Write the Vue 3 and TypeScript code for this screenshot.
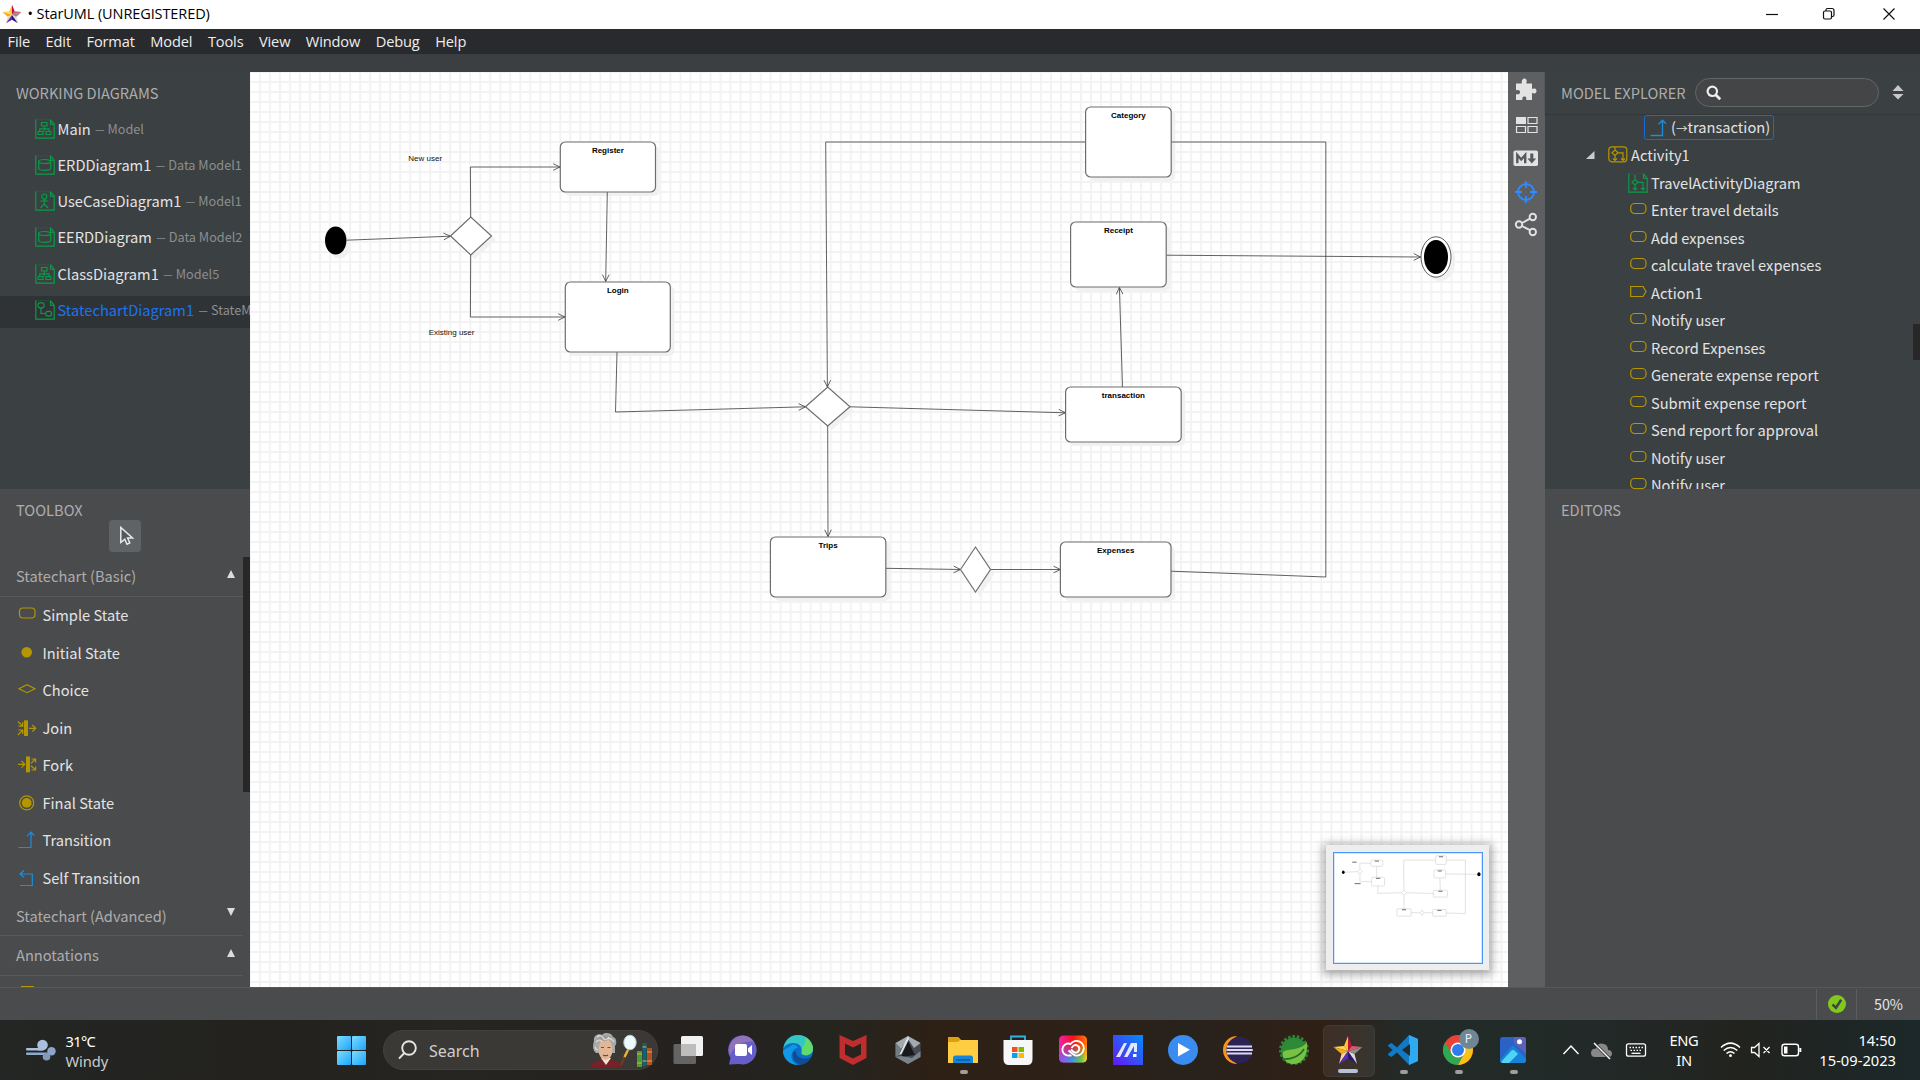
<script setup lang="ts">
interface DiagramRow { name: string; owner: string; icon: string; active?: boolean }
interface ToolItem { label: string; icon: string }
interface Box { x: number; y: number; w: number; h: number; label: string }
interface Edge { pts: number[][]; arrow: boolean }

const menus = ['File', 'Edit', 'Format', 'Model', 'Tools', 'View', 'Window', 'Debug', 'Help']

const diagrams: DiagramRow[] = [
  { name: 'Main', owner: 'Model', icon: 'class' },
  { name: 'ERDDiagram1', owner: 'Data Model1', icon: 'erd' },
  { name: 'UseCaseDiagram1', owner: 'Model1', icon: 'usecase' },
  { name: 'EERDDiagram', owner: 'Data Model2', icon: 'erd' },
  { name: 'ClassDiagram1', owner: 'Model5', icon: 'class' },
  { name: 'StatechartDiagram1', owner: 'StateMachine1', icon: 'state', active: true },
]

const tools: ToolItem[] = [
  { label: 'Simple State', icon: 'simple' },
  { label: 'Initial State', icon: 'initial' },
  { label: 'Choice', icon: 'choice' },
  { label: 'Join', icon: 'join' },
  { label: 'Fork', icon: 'fork' },
  { label: 'Final State', icon: 'final' },
  { label: 'Transition', icon: 'transition' },
  { label: 'Self Transition', icon: 'self' },
]

const actions: ToolItem[] = [
  { label: 'Enter travel details', icon: 'action' },
  { label: 'Add expenses', icon: 'action' },
  { label: 'calculate travel expenses', icon: 'action' },
  { label: 'Action1', icon: 'signal' },
  { label: 'Notify user', icon: 'action' },
  { label: 'Record Expenses', icon: 'action' },
  { label: 'Generate expense report', icon: 'action' },
  { label: 'Submit expense report', icon: 'action' },
  { label: 'Send report for approval', icon: 'action' },
  { label: 'Notify user', icon: 'action' },
  { label: 'Notify user', icon: 'action' },
]

const boxes: Box[] = [
  { x: 560.3, y: 142, w: 95.2, h: 50, label: 'Register' },
  { x: 565.3, y: 282, w: 105, h: 70, label: 'Login' },
  { x: 1085.6, y: 107, w: 85.6, h: 70, label: 'Category' },
  { x: 1070.6, y: 222, w: 95.6, h: 65, label: 'Receipt' },
  { x: 1065.6, y: 387, w: 115.6, h: 55, label: 'transaction' },
  { x: 770.4, y: 537, w: 115.4, h: 60, label: 'Trips' },
  { x: 1060.4, y: 542, w: 110.6, h: 55, label: 'Expenses' },
]

const diamonds = [
  '450.5,236 470.8,217 491.5,236 470.8,255',
  '805.5,406.8 827.7,387 850,406.8 827.7,426',
  '960.5,569.5 975.5,547 990.5,569.5 975.5,592',
]

const edges: Edge[] = [
  { pts: [[346.5, 240.2], [450.5, 236.2]], arrow: true },
  { pts: [[470.7, 217], [470.4, 167], [560, 167]], arrow: true },
  { pts: [[470.7, 255], [470.4, 317], [565, 317]], arrow: true },
  { pts: [[607.3, 192], [605.7, 281.5]], arrow: true },
  { pts: [[617, 352], [615.5, 412], [805.5, 406.8]], arrow: true },
  { pts: [[850, 406.8], [1065.4, 412.8]], arrow: true },
  { pts: [[827.7, 426], [828, 536.6]], arrow: true },
  { pts: [[885.8, 568.3], [960.5, 569.5]], arrow: true },
  { pts: [[990.5, 569.5], [1060.4, 569.5]], arrow: true },
  { pts: [[1122.5, 387], [1119.4, 287.4]], arrow: true },
  { pts: [[1166.2, 255.2], [1420.6, 257]], arrow: true },
  { pts: [[1085.6, 142], [825.7, 142], [827.4, 387]], arrow: true },
  { pts: [[1171, 571.2], [1325.8, 577], [1325.8, 142], [1171.2, 142]], arrow: false },
]

const toPoints = (e: Edge): string => e.pts.map((p) => p.join(',')).join(' ')

const head = (e: Edge): string => {
  const [x, y] = e.pts[e.pts.length - 1]
  const [px, py] = e.pts[e.pts.length - 2]
  const a = Math.atan2(y - py, x - px)
  const at = (d: number): string =>
    `${(x - 7.6 * Math.cos(a + d)).toFixed(1)},${(y - 7.6 * Math.sin(a + d)).toFixed(1)}`
  return `${at(0.45)} ${x},${y} ${at(-0.45)}`
}

const apps = ['taskview', 'chat', 'edge', 'mcafee', 'armoury', 'explorer', 'store', 'cc', 'myasus', 'player', 'eclipse', 'spring', 'staruml', 'vscode', 'chrome', 'photos']
const running = ['explorer', 'vscode', 'chrome', 'photos']
</script>

<template>
  <div class="screen">
    <svg class="defs" width="0" height="0" aria-hidden="true">
      <defs>
        <symbol id="star" viewBox="0 0 30 30">
          <path d="M15 1 L11 11 L15 16Z" fill="#ffc52e" />
          <path d="M15 1 L19 11 L15 16Z" fill="#c2103c" />
          <path d="M11 11 L0.5 12 L15 16Z" fill="#ffd94a" />
          <path d="M.5 12 L8.500 19 L15 16Z" fill="#f4ab1c" />
          <path d="M8.500 19 L6 29 L15 16Z" fill="#f7d9a0" />
          <path d="M6 29 L15 23.500 L15 16Z" fill="#5b2bc4" />
          <path d="M15 23.500 L24 29 L15 16Z" fill="#2c1470" />
          <path d="M24 29 L21.500 19 L15 16Z" fill="#d9d9d9" />
          <path d="M21.500 19 L29.500 12 L15 16Z" fill="#8c8c8c" />
          <path d="M29.500 12 L19 11 L15 16Z" fill="#e0566f" />
        </symbol>
        <symbol id="d-page" viewBox="0 0 20 20">
          <path d="M.8 .5V19.200H19.200V5.500L15.500 5.200V.5" fill="none" stroke="currentColor" stroke-width="1.200" />
          <path d="M1 .8H14" stroke="currentColor" stroke-width=".5" opacity=".5" />
          <path d="M15.500 .8L19 5" stroke="currentColor" stroke-width="1.200" />
        </symbol>
      </defs>
    </svg>

    <header class="title">
      <svg class="title-star" width="20" height="20"><use href="#star" /></svg>
      <span class="title-text"><b>•</b> StarUML (UNREGISTERED)</span>
      <svg class="win" width="140" height="28" viewBox="0 0 140 28" fill="none" stroke="#111" stroke-width="1.200">
        <path d="M8 14.500H20" />
        <rect x="65.500" y="11" width="8" height="8" rx="1.500" />
        <path d="M68 11V10a1.500 1.500 0 0 1 1.500-1.500H74A2 2 0 0 1 76 10.500V15a1.500 1.500 0 0 1-1.500 1.500H73.500" />
        <path d="M125.500 8.500L136.500 19.500M136.500 8.500L125.500 19.500" />
      </svg>
    </header>

    <nav class="menubar"><span v-for="m in menus" :key="m">{{ m }}</span></nav>

    <div class="strip"></div>

    <main class="work">
      <aside class="left">
        <section class="working">
          <h2>WORKING DIAGRAMS</h2>
          <div v-for="d in diagrams" :key="d.name" class="drow" :class="{ active: d.active }">
            <svg class="dicon" width="20" height="20" viewBox="0 0 20 20" fill="none" stroke="currentColor" stroke-width="1.200">
              <use href="#d-page" />
              <g v-if="d.icon === 'class'">
                <path d="M6.500 3.500H12V7H6.500ZM9.300 7V12M4.800 12V9.800H14V12M3.200 12.500H8V15.500H3.200ZM11 12.500H15.800V15.500H11Z" />
              </g>
              <g v-else-if="d.icon === 'erd'">
                <ellipse cx="9.700" cy="6.500" rx="6" ry="2" />
                <path d="M3.700 6.500V13.500C3.700 16 15.700 16 15.700 13.500V6.500" />
              </g>
              <g v-else-if="d.icon === 'usecase'">
                <circle cx="9.300" cy="5.500" r="2.500" />
                <path d="M9.300 8V13M5.300 10H13.300M9.300 13L5.500 17M9.300 13L13 17" />
              </g>
              <g v-else>
                <rect x="3" y="2.800" width="6" height="5" rx="2" />
                <path d="M6 8V13.500H10.500" />
                <rect x="10.800" y="11.300" width="5.700" height="4.800" rx="2" />
              </g>
            </svg>
            <span class="dname">{{ d.name }}</span>
            <span class="dash">—</span>
            <span class="downer">{{ d.owner }}</span>
          </div>
        </section>

        <section class="toolbox">
          <h2>TOOLBOX</h2>
          <div class="pointer">
            <svg width="32" height="32" viewBox="0 0 32 32"><path d="M11.800 7.500V22.500L15.800 19.200L18 24.300L20.800 23L18.600 18H23.500Z" fill="#55585a" stroke="#e8e8e8" stroke-width="1.500" /></svg>
          </div>
          <div class="palette">
            <div class="group"><span>Statechart (Basic)</span><i class="up"></i></div>
            <div v-for="t in tools" :key="t.label" class="tool">
              <svg width="20" height="20" viewBox="0 0 20 20" fill="none" stroke="#b39600" stroke-width="1.200">
                <rect v-if="t.icon === 'simple'" x="2.500" y="3" width="15.500" height="10" rx="3.500" />
                <circle v-else-if="t.icon === 'initial'" cx="9.700" cy="9.300" r="5.300" fill="#b39600" stroke="none" />
                <path v-else-if="t.icon === 'choice'" d="M2 8.700L10 4.700L18 8.700L10 12.700Z" />
                <g v-else-if="t.icon === 'join'">
                  <path d="M7 2.300H11V18H7Z" fill="#b39600" stroke="none" />
                  <path d="M1 3.500L5.500 8M5.700 4V8.200H1.500M1 17L5.500 12.200M5.700 16V12H1.500M12 10.300H18.500M15.300 7L18.700 10.300L15.300 13.600" />
                </g>
                <g v-else-if="t.icon === 'fork'">
                  <path d="M9 1.500H13V17.300H9Z" fill="#b39600" stroke="none" />
                  <path d="M1 9.300H7.500M4.500 6L7.800 9.300L4.500 12.600M14 8.300L18.500 4M14.500 4H18.600V7.500M14 10.800L18.500 15M14.500 15H18.600V11.500" />
                </g>
                <g v-else-if="t.icon === 'final'">
                  <circle cx="9.700" cy="9.900" r="7" /><circle cx="9.700" cy="9.900" r="4.900" fill="#b39600" stroke="none" />
                </g>
                <path v-else-if="t.icon === 'transition'" stroke="#1a8fe0" d="M1.500 17.500H14V2.500M10 6.200L14 2.200L17.300 5.500" />
                <path v-else stroke="#1a8fe0" d="M3 17.500H15.300V6H3M7 2.300L3 6L7 9.500" />
              </svg>
              <span>{{ t.label }}</span>
            </div>
            <div class="group"><span>Statechart (Advanced)</span><i class="down"></i></div>
            <div class="group"><span>Annotations</span><i class="up"></i></div>
            <div class="sliver"></div>
            <div class="thumb"></div>
          </div>
        </section>
      </aside>

      <section class="canvas">
        <svg class="board" width="1258" height="915" viewBox="250 72 1258 915">
          <defs>
            <pattern id="grid" x="279" y="81" width="10.013" height="10" patternUnits="userSpaceOnUse">
              <path d="M1 0V10M0 1H10.013" stroke="#f3f3f3" stroke-width="2" />
            </pattern>
          </defs>
          <rect x="250" y="72" width="1258" height="915" fill="#fff" />
          <rect x="250" y="72" width="1258" height="915" fill="url(#grid)" />
          <g class="shadow" transform="translate(4 4)">
            <rect v-for="b in boxes" :key="b.label" :x="b.x" :y="b.y" :width="b.w" :height="b.h" rx="5" />
            <polygon v-for="p in diamonds" :key="p" :points="p" />
            <ellipse cx="335.700" cy="240.500" rx="10.700" ry="14" />
            <ellipse cx="1436" cy="257" rx="15.300" ry="20.300" />
          </g>
          <g class="wire">
            <template v-for="(e, i) in edges" :key="i">
              <polyline :points="toPoints(e)" />
              <polyline v-if="e.arrow" :points="head(e)" />
            </template>
          </g>
          <g class="shape">
            <rect v-for="b in boxes" :key="b.label" :x="b.x" :y="b.y" :width="b.w" :height="b.h" rx="5" />
            <polygon v-for="p in diamonds" :key="p" :points="p" />
          </g>
          <ellipse cx="335.700" cy="240.500" rx="10.700" ry="14" />
          <ellipse cx="1436" cy="257" rx="15" ry="20.200" fill="#fff" stroke="#333" stroke-width=".8" />
          <ellipse cx="1436" cy="257" rx="12" ry="17" />
          <g class="caption">
            <text v-for="b in boxes" :key="b.label" :x="b.x + b.w / 2" :y="b.y + 11">{{ b.label }}</text>
          </g>
          <g class="note">
            <text x="408.300" y="161">New user</text>
            <text x="428.700" y="335">Existing user</text>
          </g>
        </svg>

        <div class="minimap">
          <svg width="150" height="112" viewBox="0 0 150 112">
            <g transform="translate(-33 -10.600) scale(.1255)">
              <g class="mini-line">
                <polyline v-for="(e, i) in edges" :key="i" :points="toPoints(e)" />
                <rect v-for="b in boxes" :key="b.label" :x="b.x" :y="b.y" :width="b.w" :height="b.h" rx="8" />
                <polygon v-for="p in diamonds" :key="p" :points="p" />
              </g>
              <g class="mini-ink">
                <path v-for="b in boxes" :key="b.label" :d="`M${b.x + b.w / 2 - 17} ${b.y + 8}h34`" />
                <path d="M408 159h36M428 333h48" />
              </g>
              <ellipse cx="335.700" cy="240.500" rx="11" ry="14" />
              <ellipse cx="1436" cy="257" rx="13" ry="17" />
            </g>
          </svg>
        </div>
      </section>

      <div class="rail">
        <svg width="37" height="180" viewBox="0 0 37 180">
          <path fill="#e3e3e3" d="M8 11.500H13.500C14.500 11 12.800 9 15 7C17 5.500 19.500 7.500 18.500 10.200L18.300 11.500H24V16.500C25 17.300 26 15.600 27.800 17C29.300 19 28.200 21.800 26.200 21.600C25 21.300 24.500 20.700 24 21.300V28H18.500C17.700 27 19 26 17.600 24.800C16.400 23.900 14.500 24.600 14.400 26C14.300 27 15 27.500 14 28H8V22.500C9 21.500 10 23 11.500 21.800C13 20 11.600 17.300 9.500 18C8.500 18.400 8.500 18.500 8 17.800Z" />
          <path fill="#e3e3e3" d="M8 45H18V52H8Z" />
          <path fill="none" stroke="#e3e3e3" stroke-width="1.200" d="M20 45.500H29V51.500H20ZM8.500 54.500H17.500V60.500H8.500ZM20 54.500H29V60.500H20Z" />
          <rect x="5.500" y="78.500" width="24.500" height="15.500" rx="1.800" fill="#e3e3e3" />
          <path fill="none" stroke="#58595b" stroke-width="2.400" d="M9.300 91.300V83L13.200 87.500L17.200 83V91.300" />
          <path fill="#58595b" d="M22.300 81.500H25.300V86.500H28.200L23.800 91.500L19.400 86.500H22.300Z" />
          <g fill="none" stroke="#2d8cff" stroke-width="1.900"><circle cx="18" cy="120" r="8" /><path d="M18 109V116M18 124V131M7 120H14M22 120H29" /></g>
          <g fill="none" stroke="#e3e3e3" stroke-width="1.900"><circle cx="11" cy="152.500" r="3.200" /><circle cx="24.800" cy="145" r="3.200" /><circle cx="24.800" cy="160" r="3.200" /><path d="M13.900 151L22 146.700M13.900 154L22 158.200" /></g>
        </svg>
      </div>

      <aside class="right">
        <section class="explorer">
          <div class="exhead">
            <h2>MODEL EXPLORER</h2>
            <div class="search">
              <svg width="16" height="16" viewBox="0 0 16 16" fill="none" stroke="#eee"><circle cx="6.300" cy="6.300" r="4.700" stroke-width="2.200" /><path d="M9.700 9.700L14.200 14.200" stroke-width="2.800" /></svg>
            </div>
            <svg class="sort" width="12" height="15" viewBox="0 0 12 15" fill="#c8c8c8"><path d="M6 0L11.500 6H.5ZM6 14.500L11.500 9H.5Z" /></svg>
          </div>
          <div class="tree">
            <div class="trow selected">
              <div class="pill">
                <svg width="20" height="20" viewBox="0 0 20 20" fill="none" stroke="#1a8fe0" stroke-width="1.300"><path d="M1.500 17.500H13.500V2.500M9.500 6.200L13.500 2.200L17 5.800" /></svg>
                <span>(<small>→</small>transaction)</span>
              </div>
            </div>
            <div class="trow parent">
              <svg class="twist" width="9" height="9" viewBox="0 0 9 9"><path d="M8.500 0V8H0Z" fill="#ccc" /></svg>
              <svg width="20" height="20" viewBox="0 0 20 20" fill="none" stroke="#b39600" stroke-width="1.200">
                <rect x=".8" y="1.800" width="18" height="15" rx="3" />
                <path d="M7 2V5M7 5L10 7.800L7 10.500L4 7.800ZM7 10.500V15.500M5 13.500L7 15.500L9 13.500M10 7.800H15V15.500M13 13.500L15 15.500L17 13.500" />
              </svg>
              <span>Activity1</span>
            </div>
            <div class="trow child diagram">
              <svg class="dicon" width="20" height="20" viewBox="0 0 20 20" fill="none" stroke="currentColor" stroke-width="1.200">
                <use href="#d-page" />
                <path d="M7 2V6.500M7 6.500L10 9.300L7 12L4 9.300ZM7 12V17M5 15L7 17L9 15M10 9.300H15V17M13 15L15 17L17 15" />
              </svg>
              <span>TravelActivityDiagram</span>
            </div>
            <div v-for="(a, i) in actions" :key="i" class="trow child">
              <svg width="20" height="20" viewBox="0 0 20 20" fill="none" stroke="#b39600" stroke-width="1.200">
                <rect v-if="a.icon === 'action'" x="2.700" y="3.500" width="15.300" height="10" rx="4" />
                <path v-else d="M2.700 3.500H15L18 8.500L15 13.500H2.700Z" />
              </svg>
              <span>{{ a.label }}</span>
            </div>
            <div class="thumb"></div>
          </div>
        </section>
        <section class="editors"><h2>EDITORS</h2></section>
      </aside>
    </main>

    <footer class="status">
      <div class="ok"><svg width="18" height="18" viewBox="0 0 18 18"><circle cx="9" cy="9" r="9" fill="#82c91e" /><path d="M4.500 9.500L8 12.800L13.200 4.800" fill="none" stroke="#414345" stroke-width="2.500" /></svg></div>
      <div class="zoom">50%</div>
    </footer>

    <div class="taskbar">
      <div class="weather">
        <svg width="30" height="22" viewBox="0 0 30 22" fill="#a9bfdd"><rect x="0" y="9" width="18" height="2.600" rx="1" /><rect x="0" y="13.500" width="24" height="2.600" rx="1" fill="#90a9cb" /><circle cx="16.500" cy="6" r="5.300" /><circle cx="25.500" cy="12.300" r="4.200" fill="#8da5c7" /><circle cx="20.500" cy="17.800" r="3.800" fill="#8199bd" /><path d="M12 8H19L16 11.500H12Z" /></svg>
        <p>31°C<br /><span>Windy</span></p>
      </div>
      <svg class="start" width="29" height="29" viewBox="0 0 29 29">
        <defs><linearGradient id="win" x1="0" y1="0" x2="1" y2="1" gradientUnits="objectBoundingBox"><stop offset="0" stop-color="#7fdcff" /><stop offset="1" stop-color="#1ba5fb" /></linearGradient></defs>
        <g fill="url(#win)"><rect width="14" height="14" rx="1" /><rect x="15" width="14" height="14" rx="1" /><rect y="15" width="14" height="14" rx="1" /><rect x="15" y="15" width="14" height="14" rx="1" /></g>
      </svg>
      <div class="tsearch">
        <svg width="20" height="20" viewBox="0 0 20 20" fill="none" stroke="#e6e6e6" stroke-width="1.900"><circle cx="11" cy="8" r="6.800" /><path d="M6.300 13L1 18.700" /></svg>
        <span>Search</span>
        <svg class="art" width="66" height="38" viewBox="0 -1 66 38">
          <path d="M1 35.500C2 30 8 28 17 28S31 30 33 35.500Z" fill="#7a2026" />
          <path d="M12 26L17 33L22 26Z" fill="#f3e3d6" />
          <path d="M5 9C4 4 9 1 13 3C16-.5 23 1 24 5C28 6 28 12 26 14V21H7C3 18 4 12 5 9Z" fill="#a9a9a9" />
          <ellipse cx="16.500" cy="17.500" rx="7" ry="10.500" fill="#e3b696" />
          <path d="M6 10Q9 5 13 8T19 7T26 11Q24 3 17 3T6 10Z" fill="#9b9b9b" />
          <path d="M8 5q4-3 6 1t6-1M7 10q4-4 6 0M18 7q4-2 7 3M6 15q1 3 3 3" stroke="#dedede" stroke-width="1.200" fill="none" />
          <path d="M12 15.500h3M18.500 15.500h3M14 23q2.500 1.500 5 0" stroke="#7a4b3a" stroke-width="1.200" />
          <path d="M32 33L38 19" stroke="#6b3d1f" stroke-width="2.600" />
          <path d="M35.500 25L39 18" stroke="#e6b33c" stroke-width="2.400" />
          <ellipse cx="41" cy="10.500" rx="6.200" ry="7.300" fill="#eafaff" stroke="#b9c8cc" />
          <rect x="48" y="19" width="5" height="16" fill="#4b9b3a" /><rect x="53.500" y="11" width="4" height="23" fill="#0e6470" /><rect x="58" y="16" width="5" height="17" fill="#b6501e" />
          <path d="M48 22h5M48 31h5M53.500 15h4M53.500 29h4M58 20h5M58 29h5" stroke="#e2b13c" />
        </svg>
      </div>
      <div class="apps">
        <div v-for="a in apps" :key="a" class="app" :class="{ focused: a === 'staruml' }">
          <svg width="32" height="32" viewBox="0 0 32 32">
            <g v-if="a === 'taskview'"><rect x="1.500" y="10" width="22.500" height="20" rx="1.500" fill="#646464" /><rect x="9" y="2" width="22" height="20" rx="1.500" fill="#f1f1f1" /><rect x="9" y="10" width="15" height="12" fill="#bdbdbd" /></g>
            <g v-else-if="a === 'chat'"><path d="M16 1.500A14 14.500 0 1 1 12 30L2 30.500L3.500 24A14 14.500 0 0 1 16 1.500Z" fill="#665fc9" /><path d="M16 1.500A14 14.500 0 0 0 3 21C8 10 20 6 27 8A14 14 0 0 0 16 1.500Z" fill="#9074ba" /><rect x="8" y="10" width="12" height="12" rx="2" fill="#fff" /><path d="M21 14.500L25 11V21L21 17.500Z" fill="#fff" /></g>
            <g v-else-if="a === 'edge'"><circle cx="16" cy="16" r="15" fill="#0b6fc9" /><path d="M1.500 14C3 5 9 1 16 1C25 1 31 8 31 14.500C31 20 26 22 22 21C17 20 21 17 19 13C16 7 5 8 1.500 14Z" fill="#32c6c4" /><path d="M23 3C28 6 31 10.500 31 14.500C31 20 26 22 22 21C18 20 21 17 20 14C23 11 24 7 23 3Z" fill="#62d969" /><path d="M10 11C6 14 2 15 1 17C1 25 8 31 16 31C11 29 8 24 10 19C11 16 13 14 16 13.500C14 11 12 10 10 11Z" fill="#1296e6" /><path d="M11 18C9 27 17 31 20 30.500C25 29.500 28 26 29 23C23 26 14 25 14 17Z" fill="#114b93" /></g>
            <path v-else-if="a === 'mcafee'" fill="#bf2d2f" fill-rule="evenodd" d="M2.500 1L16 7L29.500 1V24L16 31L2.500 24ZM8 9.500V20.500L16 24.500L24 20.500V9.500L16 13.500Z" />
            <g v-else-if="a === 'armoury'"><path d="M16 2L28.500 9V23L16 30L3.500 23V9Z" fill="#454b52" /><path d="M16 2L28.500 9L22 14L16 5L9 15L3.500 9Z" fill="#a4abb0" /><path d="M3.500 9L9 15L7 21L3.500 23Z" fill="#757d84" /><path d="M16 7L23 21L9 23Z" fill="#17191d" /><path d="M3.500 23L9 22L20 24L28.500 17V23L16 30Z" fill="#7b838a" /><path d="M16 2L17 5L9.500 20L7 21Z" fill="#dfe3e5" /></g>
            <g v-else-if="a === 'explorer'"><path d="M1 4Q1 3 2 3H11L14 6H1Z" fill="#e0a10f" /><path d="M1 5H10L14 6H31V29H1Z" fill="#ffcd42" /><path d="M1 3H11L13.500 5.500L11 8H1Z" fill="#dfa010" /><path d="M6 29V24Q6 21.500 8.500 21.500H23.500Q26 21.500 26 24V29Z" fill="#1684d8" /><path d="M9 26H23" stroke="#0c5a9f" stroke-width="1.500" /></g>
            <g v-else-if="a === 'store'"><path d="M9 8V2.500H23V8" fill="none" stroke="#29b5ec" stroke-width="1.800" /><path d="M1.500 6H30.500V25Q30.500 31 25 31H7Q1.500 31 1.500 25Z" fill="#f7f7f7" /><path d="M10 13H15.500V18H10Z" fill="#f25022" /><path d="M16.500 13H22V18H16.500Z" fill="#7fba00" /><path d="M10 19H15.500V24H10Z" fill="#00a4ef" /><path d="M16.500 19H22V24H16.500Z" fill="#ffb900" /></g>
            <g v-else-if="a === 'cc'">
              <defs>
                <linearGradient id="cc" x1="0" y1="0" x2="1" y2="0"><stop offset="0" stop-color="#f01fb0" /><stop offset=".5" stop-color="#f5121c" /><stop offset="1" stop-color="#ff7a00" /></linearGradient>
                <linearGradient id="cc2" x1="0" y1="0" x2="1" y2="0"><stop offset="0" stop-color="#a04af0" /><stop offset=".45" stop-color="#2f9df0" /><stop offset=".8" stop-color="#58cf5a" /><stop offset="1" stop-color="#f2e022" /></linearGradient>
                <linearGradient id="ccfade" x1="0" y1="0" x2="0" y2="1"><stop offset=".3" stop-color="#000" /><stop offset=".9" stop-color="#fff" /></linearGradient>
                <mask id="ccm"><rect x="2" y="1.500" width="28" height="28" fill="url(#ccfade)" /></mask>
              </defs>
              <rect x="2" y="1.500" width="28" height="27" rx="4.500" fill="url(#cc)" />
              <rect x="2" y="1.500" width="28" height="27" rx="4.500" fill="url(#cc2)" mask="url(#ccm)" />
              <path d="M14.500 21.500H12.500A6 6 0 1 1 13.500 10A7.300 7.300 0 1 1 18.500 21.500Q16.500 21 14.800 19.200L11.500 16.500M14 15.500L17 18.200A3.700 3.700 0 1 0 15.700 12.500L14.500 14" fill="none" stroke="#fff" stroke-width="1.900" />
            </g>
            <g v-else-if="a === 'myasus'">
              <defs><linearGradient id="ma" x1="0" y1="1" x2="1" y2="0"><stop offset="0" stop-color="#6716f3" /><stop offset="1" stop-color="#008ef9" /></linearGradient></defs>
              <path d="M1 1H31V31H1Z" fill="url(#ma)" /><path d="M4 23L12 9H15L8 23ZM12 23L19 9H25V18H22V12L15.500 23Z" fill="#dfe9ff" /><rect x="21" y="20" width="3.500" height="3" fill="#fff" />
            </g>
            <g v-else-if="a === 'player'"><circle cx="16" cy="16" r="15" fill="#3b8cf0" /><path d="M11 9V22.500L23 15.800Z" fill="#fff" /></g>
            <g v-else-if="a === 'eclipse'"><path d="M15 2A14 14 0 0 0 15 30A17 17 0 0 1 15 2Z" fill="#f7941e" /><circle cx="17.500" cy="16" r="13.200" fill="#2c2255" /><path d="M5 12.500H30M4.500 16H30.700M5 19.500H30" stroke="#dcdaf0" stroke-width="2" /></g>
            <g v-else-if="a === 'spring'"><circle cx="17" cy="16" r="13.500" fill="none" stroke="#2c8339" stroke-width="3" stroke-dasharray="2.600 1.800" /><circle cx="17" cy="16.500" r="13" fill="#2f8a37" /><path d="M30 8C31 22 25 31 15 30C8 29 5 24 6 18C12 14 24 17 30 8Z" fill="#79c142" /><path d="M5 25C14 26 23 22 27 15" stroke="#1e6d2a" stroke-width="1.600" fill="none" /></g>
            <use v-else-if="a === 'staruml'" href="#star" x="1" y="1" width="30" height="30" />
            <g v-else-if="a === 'vscode'"><path d="M22 1L31 5V27L22 31L10 18.500L4.500 23L1 21V20L5.500 16L1 12V11L4.500 9L10 13.500Z" fill="#1279c4" /><path d="M22 1L31 5V27L22 31Z" fill="#2faaf0" /><path d="M23 10V22L15 16Z" fill="#222b28" /></g>
            <g v-else-if="a === 'chrome'"><circle cx="16" cy="16" r="15" fill="#e94335" /><path d="M16 31A15 15 0 0 0 29.500 9.500H16L22 19.500Z" fill="#fbc116" /><path d="M3 8.500A15 15 0 0 0 16 31L22 19.500A7 7 0 0 1 9.500 19.500Z" fill="#2da94f" /><circle cx="16" cy="16" r="7.500" fill="#fff" /><circle cx="16" cy="16" r="6" fill="#2f7de9" /></g>
            <g v-else><rect x="3" y="3" width="26" height="26" rx="2.500" fill="#2a63c5" /><path d="M17 3H26.500Q29 3 29 5.500V20L17 9Z" fill="#5c62b9" /><path d="M3 26L14 13Q16 11 18 13L29 25V27Q28.500 29 26.500 29H5.500Q3 28.500 3 26Z" fill="#1683d8" /><path d="M4 28L14 17Q16 15 18 17L21 20L12 29H5.500Z" fill="#50d3f7" /><circle cx="22.500" cy="7.800" r="2.500" fill="#fff" /></g>
          </svg>
          <b v-if="a === 'chrome'" class="badge">P</b>
          <i v-if="running.includes(a)" class="dot"></i>
        </div>
      </div>
      <div class="tray">
        <svg width="30" height="24" viewBox="0 0 30 24" fill="none" stroke="#fff" stroke-width="1.400"><path d="M7.500 16L15 8L22.500 16" /></svg>
        <svg width="31" height="24" viewBox="0 0 31 24"><path d="M9 19Q5 19 5 14.500Q6 10 9.500 11Q12 4 18 6Q22 7 22 12Q26 12 26 16Q25.500 19 23 19Z" fill="#888" /><path d="M8 5L24 21" stroke="#222b28" stroke-width="3" /><path d="M8 5L24 21" stroke="#fff" stroke-width="1.400" /></svg>
        <svg width="38" height="24" viewBox="0 0 38 24" fill="none" stroke="#fff" stroke-width="1.300"><rect x="9.500" y="5.800" width="19" height="12.400" rx="2" /><path d="M12.500 9.500H26M13.500 12.300H25" stroke-dasharray="1.500 1.500" /><path d="M14.500 15.300H23.500" /></svg>
        <p class="lang">ENG<br />IN</p>
        <svg width="35" height="24" viewBox="0 0 35 24" fill="none" stroke="#fff" stroke-width="1.500"><path d="M8 9.500Q17.500 .8 27 9.500M10.700 12.500Q17.500 6.500 24.300 12.500M13.500 15.500Q17.500 12 21.500 15.500" /><circle cx="17.500" cy="17.700" r="1.400" fill="#fff" stroke="none" /></svg>
        <svg width="25" height="24" viewBox="0 0 25 24" fill="none" stroke="#fff" stroke-width="1.300"><path d="M3.500 9.500H6.500L11 5.500V18.500L6.500 14.500H3.500ZM15.500 9L21.500 15M21.500 9L15.500 15" /></svg>
        <svg width="36" height="24" viewBox="0 0 36 24" fill="none" stroke="#fff" stroke-width="1.400"><rect x="9" y="6.300" width="16.500" height="11.500" rx="2.500" /><path d="M27.300 10V14" stroke-width="2" /><rect x="11" y="8.500" width="3.500" height="7" fill="#fff" stroke="none" /></svg>
        <p class="clock">14:50<br />15-09-2023</p>
      </div>
    </div>
  </div>
</template>

<style>
body { margin: 0; overflow: hidden; }
</style>

<style scoped>
* { box-sizing: border-box; }
.screen {
  width: 1920px; height: 1080px; display: flex; flex-direction: column; overflow: hidden;
  background: #3b3f41; color: #e3e3e3; white-space: nowrap;
  font-family: "Noto Sans CJK SC", "Noto Sans", sans-serif; font-size: 14.65px; line-height: 20px;
}
.defs { position: absolute; }
h2 { margin: 0; font-size: 14.65px; font-weight: 400; color: #adadad; line-height: 20px; }
p { margin: 0; }
svg { flex: none; display: block; }

.title { height: 29px; flex: none; background: #fff; color: #000; display: flex; align-items: center; padding: 0 0 1px 2px; font-family: "Open Sans", "Noto Sans", sans-serif; font-size: 14.5px; }
.title-text { margin-left: 5.500px; letter-spacing: -.09px; }
.title-text b { font-weight: 400; }
.win { margin-left: auto; margin-right: 22.500px; }

.menubar { height: 25px; flex: none; background: #292a2d; color: #eee; display: flex; align-items: center; gap: 15.500px; padding: 0 0 2px 7.500px; font-family: "Open Sans", "Noto Sans", sans-serif; font-size: 14.6px; letter-spacing: -.13px; }
.strip { height: 18px; flex: none; background: #3b3f41; }
.work { height: 915px; flex: none; display: flex; }

.left { width: 250px; flex: none; display: flex; flex-direction: column; }
.working { height: 417px; flex: none; padding-top: 11px; background: #3b4042; overflow: hidden; }
.working h2 { padding-left: 16px; margin-bottom: 11.500px; }
.drow { height: 32px; margin-bottom: 4.3px; padding: 0 0 4px 35px; display: flex; align-items: center; overflow: hidden; }
.drow.active { background: #303335; }
.dicon { color: #0b9a46; }
.dname { margin-left: 2.500px; }
.active .dname { color: #1a73f0; }
.dash { margin-left: 4.500px; font-size: 10.500px; color: #8c8e8f; }
.downer { margin-left: 3px; font-size: 12.7px; color: #8c8e8f; }

.toolbox { height: 498px; flex: none; background: #4a4b4d; display: flex; flex-direction: column; }
.toolbox h2 { padding: 10.500px 0 0 16px; height: 31px; flex: none; }
.pointer { width: 32px; height: 32px; margin: 0 auto 5px; flex: none; border-radius: 4px; background: #606365; }
.palette { position: relative; flex: 1; overflow: hidden; }
.group { height: 39.5px; width: 243px; padding: 0 8px 0 16px; border-bottom: 1px solid #58595b; color: #adadad; display: flex; align-items: center; justify-content: space-between; }
.up, .down { border: 4.500px solid transparent; margin-top: -4px; }
.up { border-top: 0; border-bottom: 8px solid #dcdcdc; }
.down { border-bottom: 0; border-top: 8px solid #dcdcdc; margin-top: -7px; }
.tool { height: 37.5px; display: flex; align-items: center; padding-left: 17px; }
.tool span { margin-left: 5.500px; }
.sliver { width: 13px; height: 4px; margin: 10.500px 0 0 21px; background: #b39600; }
.thumb { position: absolute; right: 0; width: 7px; background: #272728; }
.palette .thumb { top: 0; height: 235px; }

.canvas { position: relative; width: 1258px; flex: none; background: #fff; }
.shadow { fill: #f1f1f1; }
.wire { fill: none; stroke: #3a3a3a; stroke-width: .8; }
.shape { fill: #fff; stroke: #6e6e6e; stroke-width: 1.200; }
.caption { font: bold 8px "Liberation Sans", Arial, sans-serif; text-anchor: middle; fill: #000; }
.note { font: 8px "Liberation Sans", Arial, sans-serif; fill: #111; }
.minimap { position: absolute; left: 1076px; top: 773px; width: 163px; height: 125px; padding: 7px; background: #eee; box-shadow: 0 2px 9px 3px rgba(0, 0, 0, .32); }
.minimap svg { background: #fff; border: 1px solid #4a95fb; outline: 1px solid #d5e6ff; outline-offset: -2px; }
.mini-line { fill: #fff; stroke: #d8d8d8; stroke-width: 6; }
.mini-line polyline { fill: none; }
.mini-ink { fill: none; stroke: #555; stroke-width: 7; }

.rail { width: 37px; flex: none; background: #5e5f61; }

.right { width: 375px; flex: none; display: flex; flex-direction: column; }
.explorer { height: 417px; flex: none; background: #3b4042; display: flex; flex-direction: column; }
.exhead { height: 42px; flex: none; display: flex; align-items: center; padding-left: 16px; box-shadow: 0 1px 1px #34383a; }
.exhead h2 { width: 134px; }
.search { width: 184px; height: 29px; margin-bottom: 1px; border: 1px solid #656666; border-radius: 15px; background: #444546; padding: 6px 0 0 10px; }
.sort { margin: 0 0 2px 12.500px; }
.tree { position: relative; height: 375px; overflow: hidden; }
.trow { height: 27.500px; display: flex; align-items: center; padding-left: 63px; }
.trow span { margin-left: 3px; }
.child { padding-left: 83px; }
.child span { margin-left: 3px; }
.selected { padding-left: 99px; }
.pill { width: 130px; height: 25px; border: 1px solid #1769d6; border-radius: 3px; display: flex; align-items: center; padding-left: 4px; }
.pill span { margin-left: 2px; }
.pill small { font-size: 11.500px; }
.parent { padding-left: 41px; }
.twist { margin-right: 13px; }
.tree .thumb { top: 210px; height: 36px; }
.editors { flex: 1; background: #4a4b4d; padding: 10.500px 0 0 16px; }

.status { height: 33px; flex: none; background: #4a4b4d; border-top: 1px solid #57585a; display: flex; justify-content: flex-end; align-items: center; }
.ok { width: 41px; height: 31px; border-left: 1px solid #5b5c5e; border-right: 1px solid #5b5c5e; display: flex; align-items: center; justify-content: center; }
.zoom { width: 63px; padding-left: 17px; font-size: 14.3px; }

.taskbar {
  height: 60px; flex: none; display: flex; align-items: center; color: #fff;
  font-family: "Noto Sans", "Open Sans", sans-serif; font-size: 14.7px; line-height: 20px;
  background: linear-gradient(90deg, #232624 0, #24221f 14%, #262522 24%, #25211e 36%, #242520 43%, #2e2015 49%, #2d2118 56%, #28221c 62%, #302016 69%, #232a27 73%, #222a29 82%, #22231f 91%, #1c282a 100%);
}
.weather { width: 337px; flex: none; padding-left: 26px; display: flex; align-items: center; gap: 9.500px; letter-spacing: -.7px; }
.weather p { padding-top: 1px; }
.weather span { color: #ccc; letter-spacing: -.1px; }
.tsearch { margin-left: 17px; width: 275px; height: 40px; flex: none; border-radius: 20px; background: #3a3936; border: 1px solid #42413e; display: flex; align-items: center; padding: 0 2px 0 14px; font-size: 16px; color: #cfcfcf; }
.tsearch span { margin: 1px 0 0 11px; }
.art { margin-left: auto; }
.apps { margin-left: 2.500px; display: flex; flex: none; }
.app { position: relative; width: 55px; height: 50px; display: flex; align-items: center; justify-content: center; }
.focused::before { content: ""; position: absolute; left: 2px; top: 0; width: 50px; height: 50px; border-radius: 5px; border: 1px solid #3d3c39; background: rgba(255, 255, 255, .07); }
.focused svg { position: relative; }
.focused::after { content: ""; position: absolute; left: 17px; bottom: 2px; width: 20px; height: 4px; border-radius: 2px; background: #b3c2d6; }
.dot { position: absolute; bottom: 1px; left: 24px; width: 8px; height: 4px; border-radius: 2px; background: #a09d9a; }
.badge { position: absolute; left: 28px; top: 4px; width: 20px; height: 20px; border-radius: 50%; background: #6f8794; color: #e6edf0; font-size: 12px; font-weight: 400; text-align: center; }
.tray { flex: 1; display: flex; align-items: center; padding: 0 24px 0 15.500px; }
.lang { width: 58px; text-align: center; letter-spacing: -.4px; }
.clock { margin-left: auto; text-align: right; }
</style>
